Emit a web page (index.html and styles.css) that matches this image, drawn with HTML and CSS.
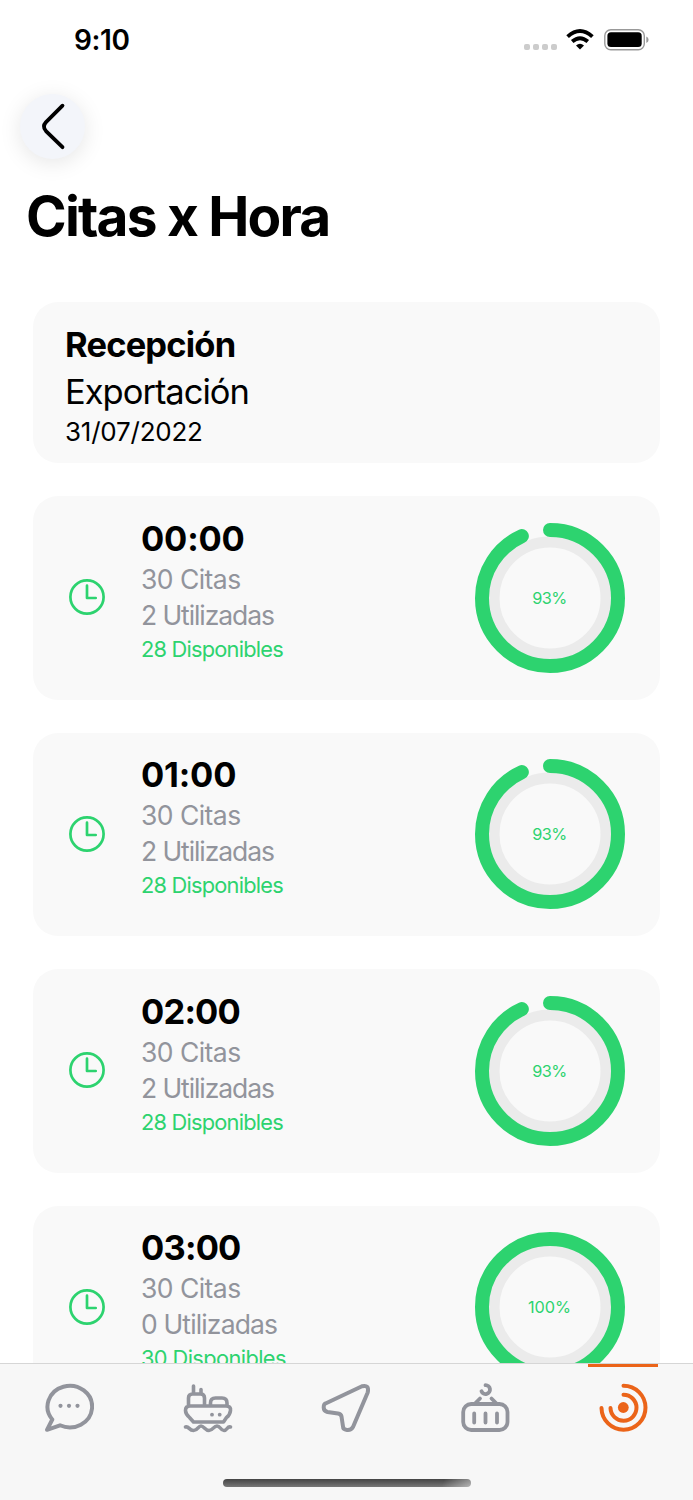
FILE: index.html
```html
<!DOCTYPE html>
<html lang="es">
<head>
<meta charset="utf-8">
<title>Citas x Hora</title>
<link rel="stylesheet" href="styles.css">
</head>
<body>
<svg class="defs" width="0" height="0">
  <symbol id="clock" viewBox="0 0 36 36"><circle cx="18" cy="18" r="16.6"/><path d="M18 6.7V19h8.7"/></symbol>
</svg>
<div class="screen">
  <header class="status">
    <span class="time">9:10</span>
    <div class="indicators">
      <div class="dots"><i></i><i></i><i></i><i></i></div>
      <svg class="wifi" width="28" height="21" viewBox="0 0 28 21" fill="none" stroke="#000" stroke-width="3.9"><path d="M1.600 7.600Q14-3.500 26.400 7.600"/><path d="M6.200 12.600Q14 6 21.800 12.600"/><path d="M14 20.500l-4-4.100q4-3.300 8 0z" fill="#000" stroke="none"/></svg>
      <svg class="battery" width="45" height="22" viewBox="0 0 45 22"><rect x="0.8" y="0.7" width="39.500" height="20" rx="6" fill="none" stroke="#999" stroke-width="1.4"/><rect x="3.400" y="3.300" width="34.300" height="14.800" rx="3.600"/><path d="M42.300 7.600q2.300 1 2.300 3.200t-2.300 3.200z" fill="#999"/></svg>
    </div>
  </header>
  <button class="back" aria-label="Atrás"><svg width="65" height="65" viewBox="0 0 65 65" fill="none" stroke="#000" stroke-width="3.800" stroke-linecap="round" stroke-linejoin="round"><path d="M42.500 11.700L26 28.100Q21.900 32.500 26 37.100L42.500 53.200"/></svg></button>
  <h1>Citas x Hora</h1>
  <main>
    <section class="card summary">
      <h2>Recepción</h2>
      <p class="kind">Exportación</p>
      <p class="date">31/07/2022</p>
    </section>
    <section class="card slot">
      <svg class="clock"><use href="#clock"/></svg>
      <div class="info"><h3 class="wide">00:00</h3><p class="citas">30 Citas</p><p class="used">2 Utilizadas</p><p class="free">28 Disponibles</p></div>
      <div class="ring"><svg viewBox="0 0 150 150"><circle class="track" cx="75" cy="75" r="56"/><circle class="value" cx="75" cy="75" r="68" pathLength="100" stroke-dasharray="93.2 100"/></svg><span>93%</span></div>
    </section>
    <section class="card slot">
      <svg class="clock"><use href="#clock"/></svg>
      <div class="info"><h3 class="wide">01:00</h3><p class="citas">30 Citas</p><p class="used">2 Utilizadas</p><p class="free">28 Disponibles</p></div>
      <div class="ring"><svg viewBox="0 0 150 150"><circle class="track" cx="75" cy="75" r="56"/><circle class="value" cx="75" cy="75" r="68" pathLength="100" stroke-dasharray="93.2 100"/></svg><span>93%</span></div>
    </section>
    <section class="card slot">
      <svg class="clock"><use href="#clock"/></svg>
      <div class="info"><h3>02:00</h3><p class="citas">30 Citas</p><p class="used">2 Utilizadas</p><p class="free">28 Disponibles</p></div>
      <div class="ring"><svg viewBox="0 0 150 150"><circle class="track" cx="75" cy="75" r="56"/><circle class="value" cx="75" cy="75" r="68" pathLength="100" stroke-dasharray="93.2 100"/></svg><span>93%</span></div>
    </section>
    <section class="card slot full">
      <svg class="clock"><use href="#clock"/></svg>
      <div class="info"><h3>03:00</h3><p class="citas">30 Citas</p><p class="used">0 Utilizadas</p><p class="free">30 Disponibles</p></div>
      <div class="ring"><svg viewBox="0 0 150 150"><circle class="track" cx="75" cy="75" r="56"/><circle class="value" cx="75" cy="75" r="68"/></svg><span>100%</span></div>
    </section>
  </main>
  <nav class="tabs">
    <div class="tab-row">
      <a class="tab"><svg viewBox="0 0 50 50"><path d="M8.300 36.500A22.300 20.800 0 1 1 16 42.300L3 46.800Z"/><g class="solid"><circle cx="16.500" cy="22.800" r="2.100"/><circle cx="25" cy="22.800" r="2.100"/><circle cx="33.500" cy="22.800" r="2.100"/></g></svg></a>
      <a class="tab"><svg class="ship" viewBox="0 0 50 50"><path d="M5.500 23V15q0-4 4-4h8q4 0 4 4v8M10.500 11V3M18 11V6.500M27.500 23v-3q0-5 5-5h6.500q5 0 5 5v3M7 23h36q5 0 4.500 4.500Q47 32 43.500 34.500L40.500 39H10.500L6.500 34.500Q2.500 31 2.500 27.500 2.500 23 7 23ZM2.500 44C6 43 6 47.500 10.500 47.500S15 43 18 43s4 4.500 8 4.500 4.500-4.500 8-4.500 3.500 4.500 7 4.500S44 43 47.500 44"/><g class="solid"><circle cx="29" cy="31.700" r="1.900"/><circle cx="36.700" cy="31.700" r="1.900"/></g></svg></a>
      <a class="tab"><svg viewBox="0 0 50 50"><path d="M4.500 20.500L41 3.300Q48.500 1.300 46.700 9.500L32 44Q30 47.500 26 47T22 43.500L20.500 33.500Q20 31 17 30.500L6.500 29Q2.700 28 2.700 24.500T4.500 20.500Z"/></svg></a>
      <a class="tab"><svg class="container" viewBox="0 0 50 50"><rect x="3.200" y="21" width="44.300" height="26" rx="8"/><path d="M14.200 30.500v9M25.500 30.500v9M37 30.500v9M15.500 20l4.500-4.500M36 20l-4.500-4.500M21.500 8.200a4.400 4.400 0 1 0 4-6"/></svg></a>
      <a class="tab active"><svg viewBox="0 0 50 50"><path d="M24.500 2.700A22 22 0 1 1 2.500 25M24.500 11.700A13 13 0 1 1 11.500 25"/><circle class="solid" cx="24.300" cy="24.500" r="5.400"/></svg></a>
    </div>
    <div class="home-bar"></div>
  </nav>
</div>
</body>
</html>
```
FILE: styles.css
```css
* { box-sizing: border-box; }
body, h1, h2, h3, p { margin: 0; }
body { font-family: Inter, "Liberation Sans", sans-serif; background: #fff; color: #000; }
.defs { display: block; }
.screen { height: 1500px; overflow: hidden; display: flex; flex-direction: column; position: relative; }

.status { display: flex; justify-content: space-between; height: 94px; padding: 24px 44px 0 74px; flex: none; }
.time { font-size: 28px; line-height: 32px; font-weight: 600; letter-spacing: -0.4px; }
.indicators { display: flex; align-items: flex-start; padding-top: 5px; }
.dots { display: flex; gap: 2.700px; margin: 15px 9.500px 0 0; }
.dots i { width: 6px; height: 5.500px; border-radius: 2px; background: #ccc; }
.wifi { margin-right: 10px; }

.back { width: 65px; height: 65px; flex: none; margin: 0 0 0 19.500px; padding: 0; border: 0; border-radius: 50%; background: #f3f5fa; box-shadow: 0 4px 22px rgba(0, 0, 0, .1); }
.back svg { display: block; }
h1 { font-size: 55px; line-height: 60px; font-weight: 650; margin: 27px 0 56px 26px; white-space: nowrap; letter-spacing: -1.800px; }

main { flex: 1; min-height: 0; overflow: hidden; padding: 0 33px; display: flex; flex-direction: column; gap: 33px; }
.card { flex: none; border-radius: 25px; background: #f9f9f9; white-space: nowrap; }
.summary { height: 161px; padding: 19px 32px; }
h2 { font-size: 34.500px; line-height: 47px; font-weight: 650; letter-spacing: -0.820px; }
.kind { font-size: 34.500px; line-height: 47px; letter-spacing: -1px; }
.date { font-size: 26px; line-height: 34px; letter-spacing: -0.220px; }

.slot { height: 203.500px; display: flex; align-items: flex-start; padding: 20.500px 35.500px 0 36px; }
.clock { width: 36px; height: 36px; margin: 62.500px 36px 0 0; fill: none; stroke: #2dd36f; stroke-width: 2.700; stroke-linecap: round; stroke-linejoin: round; }
.info { flex: 1; color: #92949c; }
h3 { font-size: 34.500px; line-height: 44px; font-weight: 650; color: #000; letter-spacing: -0.800px; }
h3.wide { letter-spacing: -0.200px; }
.citas, .used { font-size: 26.500px; line-height: 36px; letter-spacing: -0.550px; }
.used { letter-spacing: -1.080px; }
.free { font-size: 21.800px; line-height: 32px; color: #2dd36f; letter-spacing: -0.780px; }
.full .used { letter-spacing: -0.850px; }
.full .free { letter-spacing: -0.600px; }
.ring { width: 150px; height: 150px; margin-top: 6px; display: grid; place-items: center; color: #2dd36f; }
.ring > * { grid-area: 1 / 1; }
.ring svg { width: 150px; height: 150px; display: block; transform: rotate(-90deg); fill: none; }
.ring span { font-size: 16.300px; line-height: 20px; letter-spacing: -0.600px; }
.full .ring span { letter-spacing: 0; }
.track { stroke: #ebebeb; stroke-width: 11; }
.value { stroke: #2dd36f; stroke-width: 14; stroke-linecap: round; }

.tabs { height: 137px; flex: none; background: #f7f7f7; border-top: 1px solid #d6d6d6; }
.tab-row { display: grid; grid-template-columns: repeat(5, 1fr); height: 114.500px; }
.tab { display: flex; justify-content: center; padding-top: 18.500px; color: #92949c; }
.tab svg { width: 50px; height: 50px; fill: none; stroke: currentColor; stroke-width: 4; stroke-linecap: round; stroke-linejoin: round; }
.tab .ship { stroke-width: 3.600; }
.tab .container { stroke-width: 3.800; }
.tab .solid { fill: currentColor; stroke: none; }
.active { color: #eb6419; background: linear-gradient(#eb6419, #eb6419) 34px 0 / 70px 3px no-repeat; }
.home-bar { width: 248px; height: 8.500px; margin: 0 auto; border-radius: 5px; background: linear-gradient(115deg, transparent 88%, rgba(255,255,255,.45)), linear-gradient(#444, #777); }
```
